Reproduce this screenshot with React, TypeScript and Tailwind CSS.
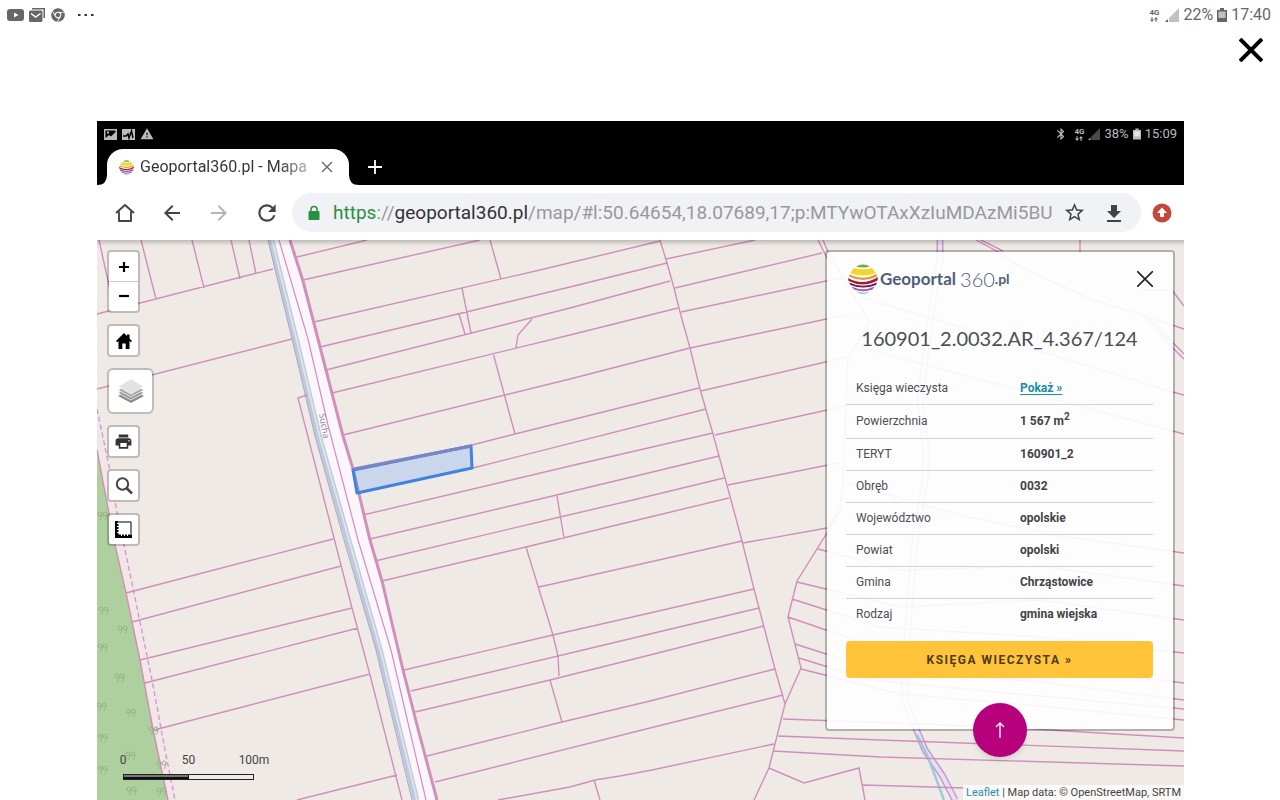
import type { ReactNode } from "react";
import {
  MdArrowBack,
  MdArrowForward,
  MdBluetooth,
  MdPrint,
  MdRefresh,
  MdStarBorder,
  MdWarning,
} from "react-icons/md";
import { FaChrome } from "react-icons/fa";

// Parcel boundaries in map coordinates
const PARCEL_LINES = [
  // west of the road
  "M99 240L110 290",
  "M141 240L156 299",
  "M192 240L204 288",
  "M231 240L240 279",
  "M249 240L256 274",
  "M97 314L273 269",
  "M97 389L292 339",
  "M307 395L298 398L334 538L352 608L370 675L402 800",
  "M333 539L126 593",
  "M341 566L132 622",
  "M352 608L140 660",
  "M358 628L145 683",
  "M370 674L154 730",
  "M397 775L297 800",
  "M97 450L115 545L126 593L140 660L153 730L168 800",
  // between the road and the long boundary
  "M297 257L367 240",
  "M303 280L480 240",
  "M314 322L540 270L660 241",
  "M320 347L462 313L570 287L667 263",
  "M326 370L570 308L670 281",
  "M332 393L570 335L678 308",
  "M343 435L570 379L690 348",
  "M353 469L472 445L515 434L699 388",
  "M357 493L473 468L706 409",
  "M363 515L570 466L713 433",
  "M370 539L540 499L719 456",
  "M375 561L560 517L633 500L724 478",
  "M382 581L526 547L650 517L729 498",
  "M539 587L650 562L742 541",
  "M404 670L553 635L650 613L754 589",
  "M411 691L558 656L650 634L759 608",
  "M415 712L550 680L650 655L764 626",
  "M427 756L562 722L650 701L775 669",
  "M435 782L650 728L783 695",
  "M498 800L570 787L595 780L620 776L652 770L774 744",
  "M490 240L501 279",
  "M462 288L471 333",
  "M459 314L465 334",
  "M532 319L518 335L516 348",
  "M493 353L515 434",
  "M557 496L564 538",
  "M526 547L553 635L558 656L559 676",
  "M550 680L562 722",
  "M594 780L600 800",
  "M660 240L667 263L674 288L680 312L690 348L700 389L713 434L731 500L742 541L754 589L775 669L785 704",
  // east of the long boundary
  "M666 259L755 240",
  "M675 288L822 253",
  "M681 312L845 277",
  "M690 348L850 314",
  "M701 391L847 357",
  "M715 435L845 406",
  "M728 485L843 462",
  "M743 543L827 528L840 510",
  "M818 240L829 262",
  "M823 240L828 252L870 323L848 357L843 480L840 510L827 533L797 581L788 617L801 668L785 704L769 768L754 800",
  "M843 482L960 515L1060 536L1184 553",
  "M818 549L900 570L1040 566L1184 586",
  "M797 582L900 607L1040 600L1184 620",
  "M792 599L880 627L1040 637L1184 653",
  "M788 617L870 645L1040 665L1184 683",
  "M795 644L870 668L1040 682L1184 700",
  "M799 658L870 680L1040 696L1184 709",
  "M801 669L900 694L1040 706L1184 720",
  "M783 719L1000 727L1184 738",
  "M778 736L880 740L1184 751",
  "M773 751L880 757L1184 766",
  "M769 768L804 783L859 768L865 800",
  "M863 785L965 788",
  "M976 240L1000 253L1020 267L1093 300L1143 315L1184 329",
  "M981 240L1003 251",
  "M1080 240L1080 253",
  "M860 297L1020 345L1173 392L1184 395",
  "M860 347L1000 385L1173 431L1184 434",
  "M1143 290L1172 290L1184 306",
  "M1143 315L1172 347L1184 359",
  "M1146 315L1184 354",
];

const TREES = [
  [98, 516], [99, 611], [118, 630], [98, 648], [115, 678], [126, 713],
  [97, 707], [149, 731], [98, 738], [126, 756], [98, 770], [127, 791], [157, 792], [157, 765],
];

const ROWS: { label: string; value: ReactNode }[] = [
  {
    label: "Księga wieczysta",
    value: <a href="#ksiega" className="text-[#168ea5] underline underline-offset-2">Pokaż »</a>,
  },
  {
    label: "Powierzchnia",
    value: <>1 567 m<sup className="text-[10px]">2</sup></>,
  },
  { label: "TERYT", value: "160901_2" },
  { label: "Obręb", value: "0032" },
  { label: "Województwo", value: "opolskie" },
  { label: "Powiat", value: "opolski" },
  { label: "Gmina", value: "Chrząstowice" },
  { label: "Rodzaj", value: "gmina wiejska" },
];

function Globe({ className }: { className: string }) {
  return (
    <svg viewBox="0 0 30 30" className={className} aria-hidden="true">
      <path d="M8 2.500Q15-1.500 22 2.500Q15 4.500 8 2.500Z" fill="#7aa83a" />
      <path d="M6 4Q15 6.500 24 4L28 9Q15 14 2 9Z" fill="#f0d92a" />
      <path d="M1.500 10.500Q15 17 28.500 10L29 12.500Q15 19.500 1 12.500Z" fill="#e39a35" />
      <path d="M0 14Q15 22.500 30 13L29.500 16.500Q15 24 0.500 17Z" fill="#9b1c38" />
      <path d="M1 18.500Q15 25 29 18.500L28 21Q15 26 2.500 21Z" fill="#6d1850" />
      <path d="M3.500 22.500Q15 28 26.500 22.500L24.500 25.500Q15 29 6 25.500Z" fill="#a558b5" />
      <path d="M8 27.500Q15 30 22 27.500Q15 32 8 27.500Z" fill="#4ba3cf" />
    </svg>
  );
}

function Signal({ className }: { className: string }) {
  return (
    <svg viewBox="0 0 14 14" className={className} aria-hidden="true">
      <path d="M0 14L3 11V14Z" fill="currentColor" />
      <path d="M4 14V10L14 0V14Z" fill="currentColor" opacity=".4" />
    </svg>
  );
}

function Battery({ className }: { className: string }) {
  return (
    <svg viewBox="0 0 10 14" className={className} aria-hidden="true">
      <path d="M3 0H7V2H10V14H0V2H3Z" fill="currentColor" />
      <path d="M1.500 3.500H8.500V10H1.500Z" fill="#fff" opacity=".6" />
    </svg>
  );
}

function Network({ className }: { className: string }) {
  return (
    <span className={`flex flex-col items-center font-bold ${className}`}>
      <span className="text-[8px] leading-[9px]">4G</span>
      <svg viewBox="0 0 8 5" className="h-[5px] w-2" aria-hidden="true">
        <path d="M2 0V3M6 2V5" stroke="currentColor" strokeWidth="1" />
        <path d="M0 2.500H4L2 5ZM4 2.500H8L6 0Z" fill="currentColor" />
      </svg>
    </span>
  );
}

function ParcelMap() {
  return (
    <svg
      viewBox="97 240 1087 560"
      preserveAspectRatio="xMinYMin slice"
      className="absolute inset-0 h-full w-full"
      aria-hidden="true"
    >
      <path d="M97 240H1184V800H97Z" fill="#efeae6" />
      {/* forest */}
      <path d="M97 400L115 480L130 555L155 680L178 800H168L140 660L97 450Z" fill="#f3e6e6" />
      <path d="M97 450L115 545L140 660L168 800H97Z" fill="#aecf9e" />
      <g fill="none" stroke="#93b588" strokeWidth="1">
        {TREES.map(([x, y]) => (
          <path
            key={`${x}-${y}`}
            d={`M${x} ${y - 2}a2 2 0 1 0 4 0a2 2 0 1 0 -4 0M${x + 4} ${y - 2}q0 4 -2 6M${x + 5} ${y - 2}a2 2 0 1 0 4 0a2 2 0 1 0 -4 0M${x + 9} ${y - 2}q0 4 -2 6`}
          />
        ))}
      </g>
      <path
        d="M97 409L109 466L117 513L124 545L139 617L152 680L165 750L175 800"
        fill="none" stroke="#c79acb" strokeWidth="1.300" strokeDasharray="5 3"
      />
      {/* road */}
      <path d="M268 240L292 339L315 436L344 540L376 650L412 800H437L418 729L398 650L370 540L343 436L318 339L292 240Z" fill="#fcf5fc" />
      <path d="M271 240L295.500 339L318.500 436L348 540L379.500 650L416 800" fill="none" stroke="#bfc8db" strokeWidth="6.500" />
      <path d="M272 240L296.500 339L319.500 436L349 540L380.500 650L417 800" fill="none" stroke="#d8e6e5" strokeWidth="2" />
      <path d="M268 240L292 339L315 436L344 540L376 650L412 800" fill="none" stroke="#aaa5cf" strokeWidth="1" />
      <path d="M279 240L308 339L328 425L358 540L391 650L426 800" fill="none" stroke="#cf90c0" strokeWidth="1.200" />
      <path d="M290 240L303 281L318 339L343 436L353 469L370 540L382 581L403 670L418 729L437 800" fill="none" stroke="#cf90bb" strokeWidth="3" />
      {/* stream */}
      <path d="M940 240L940 260L933 300L925 360L920 400L926 450L925 480L915 540L910 600L904 680L905 700L917 731L925 750L942 775L955 800" fill="none" stroke="#c79bcf" strokeWidth="7" strokeLinejoin="round" />
      <path d="M940 240L940 260L933 300L925 360L920 400L926 450L925 480L915 540L910 600L904 680L905 700L917 731L925 750L942 775L955 800" fill="none" stroke="#e8def0" strokeWidth="4" strokeLinejoin="round" />
      <path d="M917 735L928 757L944 800" fill="none" stroke="#9fcadb" strokeWidth="2.500" />
      <path d={PARCEL_LINES.join("")} fill="none" stroke="#d08fbb" strokeWidth="1.400" />
      <text transform="translate(319 414) rotate(80)" className="font-['Noto_Sans',sans-serif] text-[9px]" fill="#8d90ad">Sucha</text>
      <path d="M353 470L471 446L472 468L357 493Z" fill="#3388ff" fillOpacity=".2" stroke="#3f83dd" strokeWidth="3" strokeLinejoin="round" />
      <path d="M354 469L471 446" stroke="#7b86c6" strokeWidth="3" />
    </svg>
  );
}

const MAP_BUTTON =
  "flex h-[33px] w-[33px] items-center justify-center rounded border-2 border-black/20 bg-white bg-clip-padding";

function MapControls() {
  return (
    <div className="flex flex-col items-start gap-[11px]">
      <div className="flex h-[63px] w-[33px] flex-col rounded border-2 border-black/20 bg-white bg-clip-padding text-black">
        <button type="button" aria-label="Przybliż" className="flex flex-1 items-center justify-center border-b border-[#ccc]">
          <svg viewBox="0 0 12 12" className="h-3 w-3"><path d="M6 1V11M1 6H11" stroke="currentColor" strokeWidth="2.200" /></svg>
        </button>
        <button type="button" aria-label="Oddal" className="flex flex-1 items-center justify-center">
          <svg viewBox="0 0 12 12" className="h-3 w-3"><path d="M1 5H11" stroke="currentColor" strokeWidth="2.200" /></svg>
        </button>
      </div>
      <button type="button" aria-label="Widok początkowy" className={MAP_BUTTON}>
        <svg viewBox="0 0 16 16" className="h-4 w-4">
          <path d="M8 0L0 8L1.200 9.300L2.500 8V16H6.300V10.500H9.700V16H13.500V8L14.800 9.300L16 8L13.500 5.500V1.500H11V3Z" fill="#000" />
        </svg>
      </button>
      <button type="button" aria-label="Warstwy" className="flex h-[46px] w-[47px] items-center justify-center rounded-md border-2 border-black/20 bg-white bg-clip-padding">
        <svg viewBox="0 0 26 26" className="h-[26px] w-[26px]">
          <path d="M13 11L26 18L13 25L0 18Z" fill="#8b8b8b" />
          <path d="M13 8L26 15L13 22L0 15Z" fill="#999" stroke="#fff" strokeWidth=".7" />
          <path d="M13 5L26 12L13 19L0 12Z" fill="#aaa" stroke="#fff" strokeWidth=".7" />
          <path d="M13 1L26 8.500L13 16L0 8.500Z" fill="#e2e2e2" stroke="#fff" strokeWidth=".7" />
        </svg>
      </button>
      <button type="button" aria-label="Drukuj" className={MAP_BUTTON}>
        <MdPrint className="h-[19px] w-[19px] text-[#333]" />
      </button>
      <button type="button" aria-label="Szukaj" className={MAP_BUTTON}>
        <svg viewBox="0 0 18 18" className="h-[18px] w-[18px]">
          <circle cx="7.500" cy="7" r="5.700" fill="none" stroke="#444" strokeWidth="2" />
          <path d="M11.500 11L17 16.500" stroke="#444" strokeWidth="2.500" />
        </svg>
      </button>
      <button type="button" aria-label="Zmierz" className={MAP_BUTTON}>
        <svg viewBox="0 0 17 17" className="h-[17px] w-[17px]">
          <path d="M0 0H3.500V13.500H17V17H0Z" fill="#000" />
          <path d="M4 1H16V13" fill="none" stroke="#000" strokeWidth="1" />
          <path d="M2 2.500H4M2 5.500H4M2 8.500H4M2 11.500H4M6.500 13V15M9.500 13V15M12.500 13V15" stroke="#fff" strokeWidth="1" />
        </svg>
      </button>
    </div>
  );
}

function ParcelPanel() {
  return (
    <section className="relative w-[350px] rounded border-2 border-black/25 bg-white/90 bg-clip-padding pt-3 pr-5 pb-[51px] pl-[19px] text-[#4a4f55]">
      <header className="flex h-[30px] items-center justify-between">
        <a href="#home" className="flex items-center gap-0.5 font-['Lato',sans-serif] text-[17px] leading-5 text-[#4d6079]">
          <Globe className="ml-0.5 h-[30px] w-[30px]" />
          <span className="font-bold">Geoportal</span>
          <span className="ml-0.5 text-xl font-light">360</span>
          <span className="-ml-0.5 text-sm leading-5 font-bold">.pl</span>
        </a>
        <button type="button" aria-label="Zamknij panel" className="flex h-4 w-4 items-center justify-center">
          <svg viewBox="0 0 16 16" className="h-4 w-4"><path d="M0 0L16 16M16 0L0 16" stroke="#222" strokeWidth="1.600" /></svg>
        </button>
      </header>
      <h1 className="mt-[30px] text-center font-['Lato',sans-serif] text-xl leading-7 whitespace-nowrap">
        160901_2.0032.AR_4.367/124
      </h1>
      <table className="mt-5 w-full text-left text-xs">
        <tbody>
          {ROWS.map((row) => (
            <tr key={row.label} className="h-8 border-b border-[#d3d3d5] last:border-b-0 nth-2:h-[34px]">
              <th scope="row" className="w-[174px] pl-[10px] font-normal">{row.label}</th>
              <td className="font-bold text-[#3f4448]">{row.value}</td>
            </tr>
          ))}
        </tbody>
      </table>
      <button type="button" className="mt-[11px] h-[37px] w-full rounded bg-[#ffc43a] text-xs font-bold tracking-[1.5px] text-[#4c3c1c]">
        KSIĘGA WIECZYSTA »
      </button>
      <button
        type="button"
        aria-label="Zwiń panel"
        className="absolute -bottom-7 left-1/2 flex h-[54px] w-[54px] -translate-x-1/2 items-center justify-center rounded-full bg-[#b6007c] shadow-md"
      >
        <svg viewBox="0 0 10 16" className="h-4 w-[10px]">
          <path d="M5 16V1M1 5L5 1L9 5" fill="none" stroke="#fff" strokeWidth="1.300" />
        </svg>
      </button>
    </section>
  );
}

function MapScale() {
  return (
    <div className="absolute bottom-5 left-[26px] w-[131px] text-xs text-[#444]">
      <div className="flex h-[22px] justify-between">
        {["0", "50", "100m"].map((mark) => (
          <span key={mark} className="flex w-0 justify-center leading-4">{mark}</span>
        ))}
      </div>
      <div className="flex h-[6px] border border-[#222]">
        <span className="w-1/2 border-r border-b-2 border-[#111] bg-[#777]" />
      </div>
    </div>
  );
}

function BrowserBar() {
  return (
    <div className="flex h-[55px] items-center bg-white pr-[11px] pl-4 text-[#444]">
      <nav className="flex items-center gap-[23px]">
        <button type="button" aria-label="Strona główna">
          <svg viewBox="0 0 24 24" className="h-6 w-6">
            <path d="M3 12L12 4L21 12M6 10.500V20H18V10.500" fill="none" stroke="currentColor" strokeWidth="1.900" strokeLinejoin="round" />
          </svg>
        </button>
        <button type="button" aria-label="Wstecz"><MdArrowBack className="h-6 w-6" /></button>
        <button type="button" aria-label="Dalej"><MdArrowForward className="h-6 w-6 text-[#b5b5b5]" /></button>
        <button type="button" aria-label="Odśwież"><MdRefresh className="h-[26px] w-[26px]" /></button>
      </nav>
      <div className="ml-3 flex h-[39px] min-w-0 flex-1 items-center rounded-full bg-[#f0f2f5] pr-[17px] pl-[14px]">
        <svg viewBox="0 0 16 16" className="h-4 w-4 shrink-0" aria-hidden="true">
          <path d="M5 7V4.500a3 3 0 0 1 6 0V7" fill="none" stroke="#2a8f41" strokeWidth="1.500" />
          <rect x="2.500" y="6" width="11" height="9" rx="1" fill="#2a8f41" />
        </svg>
        <a href="#map" className="ml-[11px] min-w-0 flex-1 overflow-hidden text-[19px] leading-6 whitespace-nowrap text-[#999]">
          <span className="text-[#2a8f41]">https</span>://<span className="text-[#333]">geoportal360.pl</span>
          /map/#l:50.64654,18.07689,17;p:MTYwOTAxXzIuMDAzMi5BU
        </a>
        <button type="button" aria-label="Dodaj zakładkę" className="ml-2"><MdStarBorder className="h-[23px] w-[23px]" /></button>
        <button type="button" aria-label="Pobierz" className="ml-[18px]">
          <svg viewBox="0 0 20 20" className="h-5 w-5">
            <path d="M7 2H13V8H17L10 15L3 8H7ZM3 17H17V19H3Z" fill="#3f4347" />
          </svg>
        </button>
      </div>
      <button type="button" aria-label="Aktualizacja" className="ml-[10px]">
        <svg viewBox="0 0 22 22" className="h-[22px] w-[22px]">
          <circle cx="11" cy="11" r="9.500" fill="#c4473c" />
          <path d="M11 5.500L16 11H13V15H9V11H6Z" fill="#fff" />
        </svg>
      </button>
    </div>
  );
}

function TabStrip() {
  return (
    <div className="flex h-[38px] items-end">
      <svg viewBox="0 0 10 10" className="h-[10px] w-[10px]" aria-hidden="true"><path d="M0 10Q10 10 10 0V10Z" fill="#fff" /></svg>
      <div className="flex h-9 w-[242px] items-center rounded-t-2xl bg-white pl-3">
        <Globe className="h-[15px] w-[15px] shrink-0" />
        <span className="ml-1.5 w-[172px] overflow-hidden bg-linear-to-r from-[#333] from-80% to-[#ccc] bg-clip-text text-base whitespace-nowrap text-transparent">
          Geoportal360.pl - Mapa
        </span>
        <button type="button" aria-label="Zamknij kartę" className="ml-[9px]">
          <svg viewBox="0 0 12 12" className="h-3 w-3"><path d="M1 1L11 11M11 1L1 11" stroke="#666" strokeWidth="1.400" /></svg>
        </button>
      </div>
      <svg viewBox="0 0 10 10" className="h-[10px] w-[10px]" aria-hidden="true"><path d="M10 10Q0 10 0 0V10Z" fill="#fff" /></svg>
      <button type="button" aria-label="Nowa karta" className="flex h-9 w-8 items-center justify-center">
        <svg viewBox="0 0 14 14" className="h-[14px] w-[14px]"><path d="M7 0V14M0 7H14" stroke="#fff" strokeWidth="1.800" /></svg>
      </button>
    </div>
  );
}

export default function App() {
  return (
    <div className="flex min-h-screen flex-col bg-white font-['Roboto',sans-serif]">
      <div className="flex h-[29px] items-center justify-between pr-[9px] pl-[7px] text-[#666]">
        <div className="flex items-center gap-[5px]">
          <svg viewBox="0 0 17 12" className="h-3 w-[17px]"><rect width="17" height="12" rx="3" fill="currentColor" /><path d="M7 3.500V8.500L11.500 6Z" fill="#fff" /></svg>
          <svg viewBox="0 0 16 14" className="h-[14px] w-4">
            <path d="M3 0H16V10H14.500V1.500H3Z" fill="currentColor" />
            <rect y="2.500" width="13.500" height="11.500" rx="1.500" fill="currentColor" />
            <path d="M2 5.500L6.700 9L11.500 5.500" fill="none" stroke="#fff" strokeWidth="1.500" />
          </svg>
          <FaChrome className="ml-px h-[14px] w-[14px]" />
          <svg viewBox="0 0 16 4" className="ml-2 h-1 w-4"><path d="M0 1H2.500V3H0ZM6.500 1H9V3H6.500ZM13 1H15.500V3H13Z" fill="#333" /></svg>
        </div>
        <div className="flex items-center text-base">
          <Network className="mr-1.5" />
          <Signal className="mr-1 h-[14px] w-[14px]" />
          <span>22%</span>
          <Battery className="mx-1 h-[14px] w-[10px]" />
          <span>17:40</span>
        </div>
      </div>
      <div className="flex h-[92px] items-start justify-end pt-[9px] pr-[17px]">
        <button type="button" aria-label="Zamknij">
          <svg viewBox="0 0 24 24" className="h-6 w-6"><path d="M1 1L23 23M23 1L1 23" stroke="#000" strokeWidth="4" /></svg>
        </button>
      </div>
      <main className="mr-24 ml-[97px] flex flex-1 flex-col">
        <div className="bg-black">
          <div className="flex h-[26px] items-center justify-between px-[7px] text-[#bbb]">
            <div className="flex items-center gap-[5px]">
              <svg viewBox="0 0 13 11" className="h-[11px] w-[13px]">
                <path d="M0 0H13V11H0ZM1.500 1.500V9L5 6L7 7.500L11.500 3V1.500Z" fill="currentColor" fillRule="evenodd" />
                <path d="M3 2.500H5V4.500H3Z" fill="currentColor" />
              </svg>
              <svg viewBox="0 0 13 11" className="h-[11px] w-[13px]"><path d="M0 0H13V11H0Z" fill="currentColor" /><path d="M1 7H4L6 5L7 9L9.500 2L11 9" fill="none" stroke="#000" strokeWidth="1.500" /></svg>
              <MdWarning className="h-[14px] w-[14px]" />
            </div>
            <div className="flex items-center text-[13px]">
              <MdBluetooth className="mr-1.5 h-[14px] w-[14px]" />
              <Network className="mr-1" />
              <Signal className="mr-1 h-3 w-3" />
              <span>38%</span>
              <Battery className="mx-1 h-3 w-2" />
              <span>15:09</span>
            </div>
          </div>
          <TabStrip />
        </div>
        <BrowserBar />
        <div className="relative flex flex-1 items-start justify-between overflow-hidden pt-[10px] pr-[9px] pb-10 pl-[10px]">
          <ParcelMap />
          <div className="absolute inset-x-0 top-0 h-1.5 bg-linear-to-b from-black/20 to-transparent" />
          <div className="relative"><MapControls /></div>
          <ParcelPanel />
          <MapScale />
          <p className="absolute right-0 bottom-0 bg-white/70 px-[3px] text-[11px] leading-[15px] text-[#444]">
            <a href="#leaflet" className="text-[#2b8ba8]">Leaflet</a> | Map data: © OpenStreetMap, SRTM
          </p>
        </div>
      </main>
    </div>
  );
}
